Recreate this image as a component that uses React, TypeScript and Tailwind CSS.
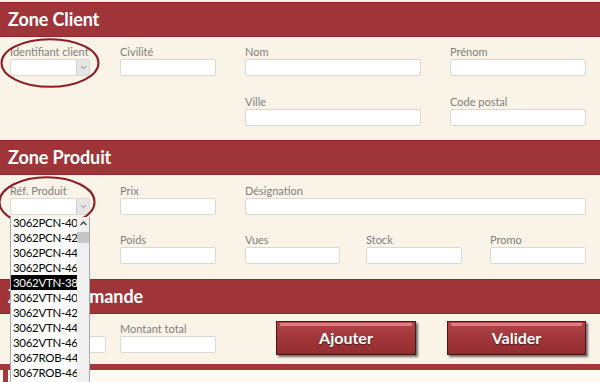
import React from "react";

const ITEMS = [
  "3062PCN-40",
  "3062PCN-42",
  "3062PCN-44",
  "3062PCN-46",
  "3062VTN-38",
  "3062VTN-40",
  "3062VTN-42",
  "3062VTN-44",
  "3062VTN-46",
  "3067ROB-44",
  "3067ROB-46",
];

function ZoneHeader({ title }: { title: string }) {
  return (
    <div className="h-[35px] bg-[#9f3539] border-t border-b border-[#8e2a2e] flex items-center pl-[8px]">
      <span className="text-white font-bold text-[18px] tracking-[-0.1px]">{title}</span>
    </div>
  );
}

function Field({ label, className, combo }: { label: string; className: string; combo?: boolean }) {
  return (
    <div className={`shrink-0 flex flex-col ${className}`}>
      <span className="h-[15px] leading-[15px] text-[11px] text-[#7f7f7f] whitespace-nowrap">{label}</span>
      <div className="h-[17px] bg-white border border-[#dcd8d2] rounded-[2px] flex justify-end">
        {combo && (
          <div className="w-[13px] h-full bg-[#e6e6e6] border-l border-[#cfcfcf] flex items-center justify-center">
            <svg width="7" height="5" viewBox="0 0 7 5">
              <path d="M1 1.2 L3.5 3.6 L6 1.2" fill="none" stroke="#7a7a7a" strokeWidth="0.9" />
            </svg>
          </div>
        )}
      </div>
    </div>
  );
}

function ActionButton({ label, className }: { label: string; className: string }) {
  return (
    <button
      type="button"
      className={`shrink-0 h-[34px] relative border border-[#4e1416] bg-gradient-to-b from-[#b0474b] via-[#a0363a] to-[#932c30] shadow-[2px_2px_2px_rgba(0,0,0,0.55)] text-white font-bold text-[16px] [text-shadow:0_1px_1px_rgba(0,0,0,0.5)] ${className}`}
    >
      <span className="absolute left-[3px] right-[3px] top-[1px] h-[3px] bg-[#e27c7f] rounded-[1px]" />
      {label}
    </button>
  );
}

function Ellipse({ className }: { className: string }) {
  return (
    <svg className={`absolute pointer-events-none ${className}`} viewBox="0 0 100 50" preserveAspectRatio="none">
      <ellipse cx="50" cy="25" rx="48.5" ry="23.8" fill="none" stroke="#8c1d26" strokeWidth="2" vectorEffect="non-scaling-stroke" />
    </svg>
  );
}

export default function App() {
  return (
    <div className="relative w-[600px] h-[382px] overflow-hidden bg-[#faf3e8] pt-[2px] font-['Lato',sans-serif]">
      <ZoneHeader title="Zone Client" />
      <div className="pt-[7px] pb-[14px] flex flex-col gap-[18px]">
        <div className="flex">
          <Field label="Identifiant client" className="ml-[10px] w-[80px]" combo />
          <Field label="Civilité" className="ml-[30px] w-[96px]" />
          <Field label="Nom" className="ml-[29px] w-[176px]" />
          <Field label="Prénom" className="ml-[29px] w-[136px]" />
        </div>
        <div className="flex">
          <Field label="Ville" className="ml-[245px] w-[176px]" />
          <Field label="Code postal" className="ml-[29px] w-[136px]" />
        </div>
      </div>

      <ZoneHeader title="Zone Produit" />
      <div className="pt-[8px] pb-[15px] flex flex-col gap-[17px]">
        <div className="flex">
          <Field label="Réf. Produit" className="ml-[10px] w-[80px]" combo />
          <Field label="Prix" className="ml-[30px] w-[96px]" />
          <Field label="Désignation" className="ml-[29px] w-[341px]" />
        </div>
        <div className="flex">
          <Field label="Poids" className="ml-[120px] w-[96px]" />
          <Field label="Vues" className="ml-[29px] w-[95px]" />
          <Field label="Stock" className="ml-[26px] w-[96px]" />
          <Field label="Promo" className="ml-[28px] w-[96px]" />
        </div>
      </div>

      <ZoneHeader title="Zone Commande" />
      <div className="pt-[7px] h-[50px] flex items-start">
        <Field label="Quantité" className="ml-[10px] w-[96px]" />
        <Field label="Montant total" className="ml-[14px] w-[96px]" />
        <ActionButton label="Ajouter" className="ml-[60px] w-[140px]" />
        <ActionButton label="Valider" className="ml-[31px] w-[139px]" />
      </div>
      <div className="h-[20px] border-t-[6px] border-[#a3383c] bg-[#fcf8f2] flex">
        <div className="ml-[3px] w-[5px] bg-[#a3383c]" />
      </div>

      <Ellipse className="left-[0px] top-[38px] w-[100px] h-[50px]" />
      <Ellipse className="left-[-2px] top-[176px] w-[98px] h-[52px]" />

      <div className="absolute left-[10px] top-[217px] w-[80px] h-[170px] bg-white border-l border-r border-[#a8a8a8] flex overflow-hidden">
        <div className="w-[66px] flex flex-col -mt-[2px]">
          {ITEMS.map((item, i) => (
            <div
              key={item}
              className={`h-[15px] shrink-0 leading-[15px] text-[11.5px] tracking-[-0.3px] pl-[2px] whitespace-nowrap ${
                i === 4 ? "bg-black text-white" : "text-black"
              }`}
            >
              {item}
            </div>
          ))}
        </div>
        <div className="ml-auto w-[13px] bg-[#f0f0f0] flex flex-col items-center">
          <svg width="9" height="9" viewBox="0 0 9 9" className="mt-[2px]">
            <path d="M1.5 6 L4.5 3 L7.5 6" fill="none" stroke="#404040" strokeWidth="1.3" />
          </svg>
          <div className="mt-[4px] w-[12px] h-[11px] bg-[#c6c6c6]" />
        </div>
      </div>
    </div>
  );
}
